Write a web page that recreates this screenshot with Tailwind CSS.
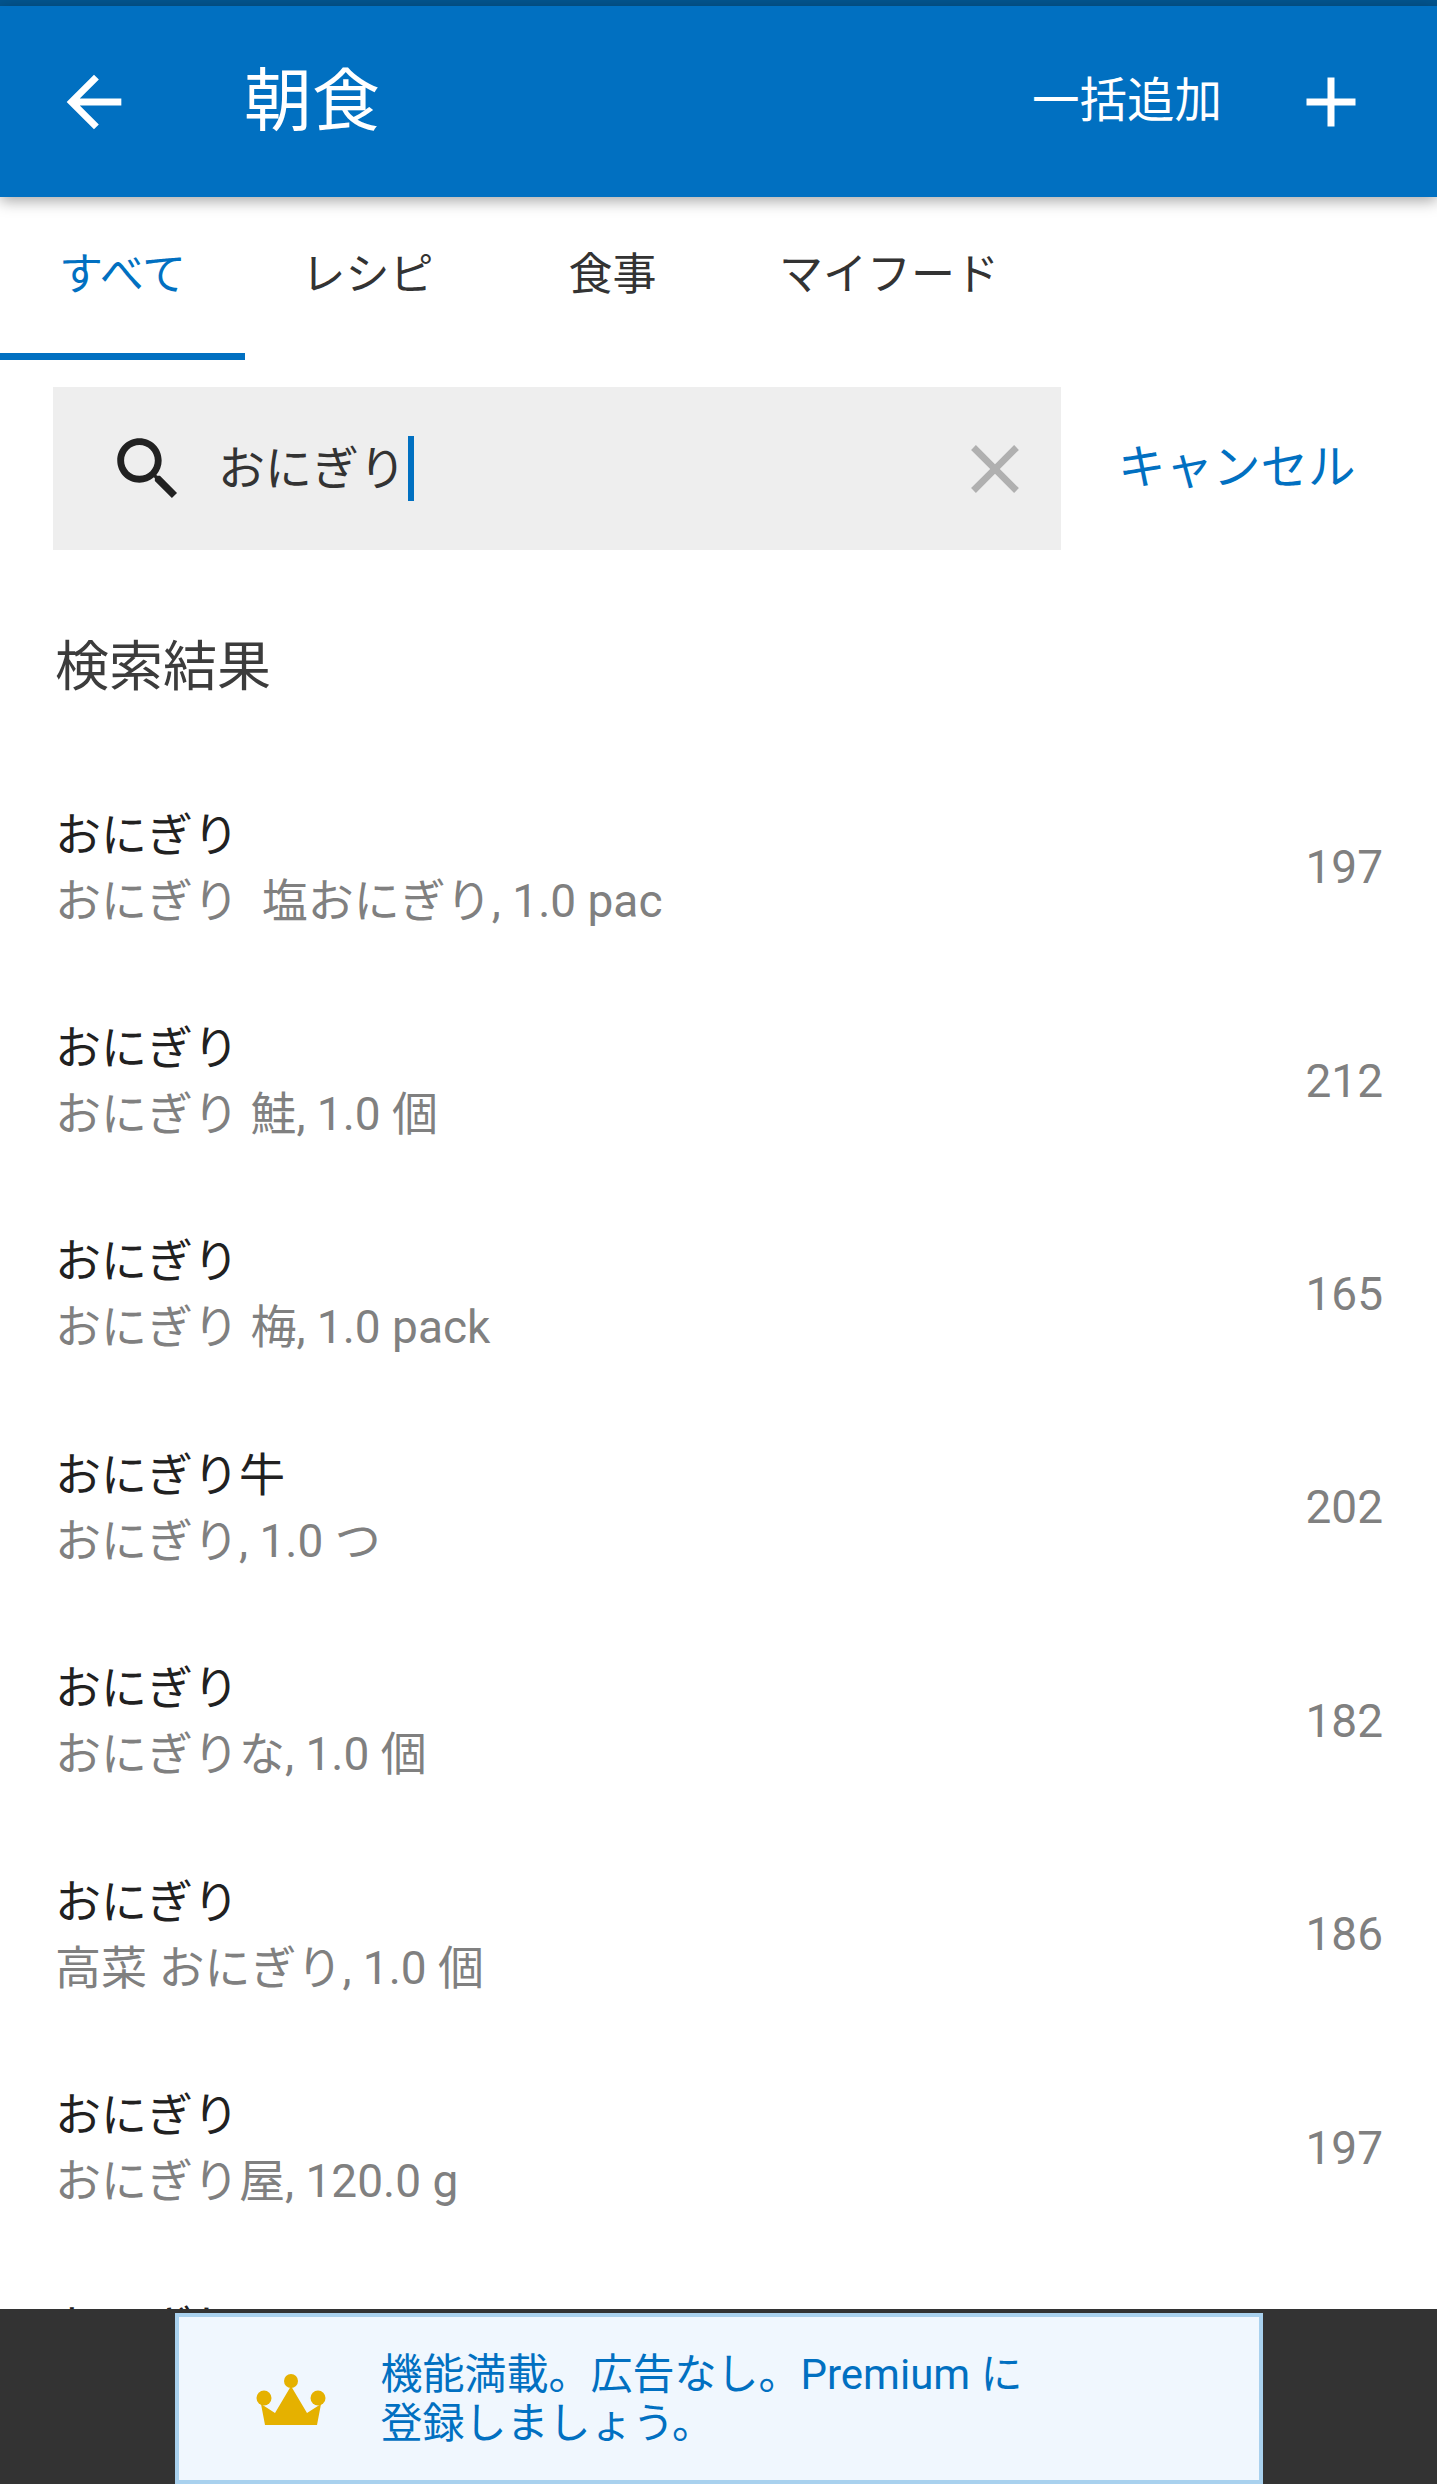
<!DOCTYPE html>
<html lang="ja">
<head>
  <meta charset="UTF-8" />
  <meta name="viewport" content="width=device-width, initial-scale=1.0"/>
  <title>朝食</title>
  <script src="https://cdn.jsdelivr.net/npm/@tailwindcss/browser@4"></script>
</head>
<body class="bg-white font-['Roboto','Noto_Sans_CJK_JP',sans-serif]">
  <div class="flex flex-col h-[2484px] overflow-hidden">

    <!-- Header -->
    <div class="h-[6px] bg-[#03558f] shrink-0"></div>
    <header class="relative z-10 h-[191px] shrink-0 flex items-center bg-[#0170c1] text-white shadow-[0_4px_14px_rgba(0,0,0,0.35)]">
      <svg class="w-[82px] h-[82px] ml-[53px] fill-current" viewBox="0 0 24 24"><path d="M20 11H7.83l5.59-5.59L12 4l-8 8 8 8 1.41-1.41L7.83 13H20v-2z"/></svg>
      <h1 class="ml-[109px] text-[68px] leading-none">朝食</h1>
      <span class="ml-auto text-[47.5px] leading-none">一括追加</span>
      <svg class="w-[84px] h-[84px] ml-[67px] mr-[64px] fill-current" viewBox="0 0 24 24"><path d="M19 13h-6v6h-2v-6H5v-2h6V5h2v6h6v2z"/></svg>
    </header>

    <!-- Tabs -->
    <nav class="h-[163px] shrink-0 flex text-[44px] text-[#333]">
      <div class="w-[245px] flex items-center justify-center border-b-[7px] border-[#0170c1] text-[#0170c1]">すべて</div>
      <div class="w-[245px] flex items-center justify-center pb-[7px]">レシピ</div>
      <div class="w-[245px] flex items-center justify-center pb-[7px]">食事</div>
      <div class="px-[44px] flex items-center justify-center pb-[7px]">マイフード</div>
    </nav>

    <!-- Search -->
    <div class="mt-[27px] pl-[53px] shrink-0 flex items-center">
      <div class="w-[1008px] h-[163px] bg-[#eeeeee] flex items-center">
        <svg class="w-[82px] h-[82px] ml-[54px] fill-[#212121]" viewBox="0 0 24 24"><path d="M15.5 14h-.79l-.28-.27C15.41 12.59 16 11.11 16 9.5 16 5.91 13.09 3 9.5 3S3 5.91 3 9.5 5.91 16 9.5 16c1.61 0 3.09-.59 4.23-1.57l.27.28v.79l5 4.99L20.49 19l-4.99-5zm-6 0C7.01 14 5 11.99 5 9.5S7.01 5 9.5 5 14 7.01 14 9.5 11.99 14 9.5 14z"/></svg>
        <span class="ml-[29px] text-[47px] leading-none text-[#333]">おにぎり</span>
        <span class="w-[6px] h-[65px] bg-[#0170c1] ml-[2px]"></span>
        <svg class="w-[82px] h-[82px] ml-auto mr-[25px] fill-[#b0b0b0]" viewBox="0 0 24 24"><path d="M19 6.41L17.59 5 12 10.59 6.41 5 5 6.41 10.59 12 5 17.59 6.41 19 12 13.41 17.59 19 19 17.59 13.41 12z"/></svg>
      </div>
      <span class="ml-[57px] text-[47.5px] leading-none text-[#0170c1]">キャンセル</span>
    </div>

    <!-- Results -->
    <div class="flex-1 min-h-0 overflow-hidden">
      <h2 class="pt-[86px] h-[211px] text-[54px] leading-[64px] text-[#3c3c3c] pl-[55px]">検索結果</h2>
      <ul class="text-[46px] pl-[55px] pr-[54px]">
        <li class="h-[213.4px] flex items-center justify-between">
          <div><p class="leading-[66px] text-[#212121]">おにぎり</p><p class="leading-[66px] text-[#808080]">おにぎり&nbsp;&nbsp;塩おにぎり, 1.0 pac</p></div>
          <span class="text-[#808080]">197</span>
        </li>
        <li class="h-[213.4px] flex items-center justify-between">
          <div><p class="leading-[66px] text-[#212121]">おにぎり</p><p class="leading-[66px] text-[#808080]">おにぎり 鮭, 1.0 個</p></div>
          <span class="text-[#808080]">212</span>
        </li>
        <li class="h-[213.4px] flex items-center justify-between">
          <div><p class="leading-[66px] text-[#212121]">おにぎり</p><p class="leading-[66px] text-[#808080]">おにぎり 梅, 1.0 pack</p></div>
          <span class="text-[#808080]">165</span>
        </li>
        <li class="h-[213.4px] flex items-center justify-between">
          <div><p class="leading-[66px] text-[#212121]">おにぎり牛</p><p class="leading-[66px] text-[#808080]">おにぎり, 1.0 つ</p></div>
          <span class="text-[#808080]">202</span>
        </li>
        <li class="h-[213.4px] flex items-center justify-between">
          <div><p class="leading-[66px] text-[#212121]">おにぎり</p><p class="leading-[66px] text-[#808080]">おにぎりな, 1.0 個</p></div>
          <span class="text-[#808080]">182</span>
        </li>
        <li class="h-[213.4px] flex items-center justify-between">
          <div><p class="leading-[66px] text-[#212121]">おにぎり</p><p class="leading-[66px] text-[#808080]">高菜 おにぎり, 1.0 個</p></div>
          <span class="text-[#808080]">186</span>
        </li>
        <li class="h-[213.4px] flex items-center justify-between">
          <div><p class="leading-[66px] text-[#212121]">おにぎり</p><p class="leading-[66px] text-[#808080]">おにぎり屋, 120.0 g</p></div>
          <span class="text-[#808080]">197</span>
        </li>
        <li class="h-[213.4px] flex items-center justify-between">
          <div><p class="leading-[66px] text-[#212121]">おにぎり</p><p class="leading-[66px] text-[#808080]">おにぎり, 1.0 個</p></div>
          <span class="text-[#808080]">180</span>
        </li>
      </ul>
    </div>

    <!-- Premium banner -->
    <footer class="h-[175px] shrink-0 bg-[#333333] pt-[4px] flex justify-center">
      <div class="w-[1088px] h-[171px] bg-[#f0f7fe] border-[4px] border-[#a9d1ee] flex items-center">
        <svg class="w-[70px] h-[52px] ml-[77px] fill-[#e5b100]" viewBox="0 0 70 52">
          <circle cx="35" cy="8" r="7"/><circle cx="8" cy="25" r="7.5"/><circle cx="62" cy="25" r="7.5"/>
          <path d="M9 52 5 31 19 40 35 13 51 40 65 31 61 52z"/>
        </svg>
        <p class="ml-[55px] w-[680px] text-[42px] leading-[49px] text-[#0170c1]">機能満載。広告なし。Premium に登録しましょう。</p>
      </div>
    </footer>
  </div>
</body>
</html>
